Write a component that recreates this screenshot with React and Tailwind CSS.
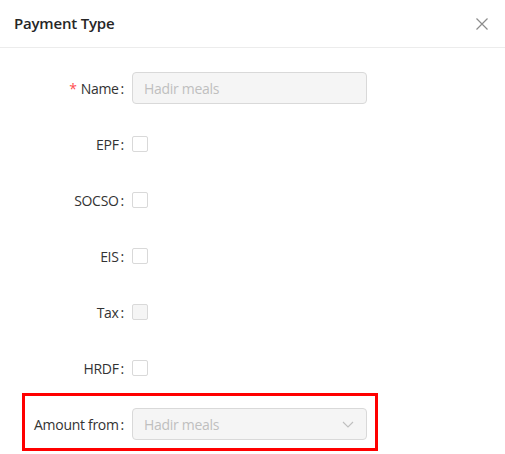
import React from "react";

const font = { fontFamily: '"Open Sans", "Noto Sans", sans-serif' };

function Label({ children, required, w = "w-[124px]" }) {
  return (
    <div className={`${w} h-[32px] shrink-0 flex justify-end items-center text-[14px] tracking-[-0.3px] text-[#333333]`}>
      {required && <span className="text-[#ff4d4f] mr-[4px] text-[14px]">*</span>}
      <span>{children}</span>
      <span className="ml-[2px]">:</span>
    </div>
  );
}

function Checkbox({ disabled }) {
  return (
    <div
      className={`w-[16px] h-[16px] rounded-[2px] border border-[#d9d9d9] ${disabled ? "bg-[#f5f5f5]" : "bg-white"}`}
    />
  );
}

function CheckRow({ label, disabled }) {
  return (
    <div className="flex items-center h-[32px] mt-[24px]">
      <Label>{label}</Label>
      <div className="ml-[8px]">
        <Checkbox disabled={disabled} />
      </div>
    </div>
  );
}

export default function App() {
  return (
    <div className="w-[505px] h-[454px] bg-white overflow-hidden" style={font}>
      <div className="h-[48px] flex items-center justify-between border-b border-[#ececec]">
        <div className="pl-[14px] text-[15px] font-semibold text-[#262626] tracking-[-0.2px]">Payment Type</div>
        <div className="pr-[17px] pt-[1px]">
          <svg width="12" height="12" viewBox="0 0 12 12">
            <path d="M0.5 0.5 L11.5 11.5 M11.5 0.5 L0.5 11.5" stroke="#8c8c8c" strokeWidth="1.2" fill="none" />
          </svg>
        </div>
      </div>
      <div className="pt-[24px]">
        <div className="flex items-center h-[32px]">
          <Label required>Name</Label>
          <div className="ml-[8px] w-[235px] h-[32px] rounded-[4px] border border-[#d9d9d9] bg-[#f5f5f5] flex items-center px-[11px] text-[14px] tracking-[-0.3px] text-[#bfbfbf]">
            Hadir meals
          </div>
        </div>
        <CheckRow label="EPF" />
        <CheckRow label="SOCSO" />
        <CheckRow label="EIS" />
        <CheckRow label="Tax" disabled />
        <CheckRow label="HRDF" />
        <div className="ml-[22px] mt-[9px] w-[356px] h-[58px] border-[3px] border-[#ff0000] flex items-start pt-[12px]">
          <Label w="w-[99px]">Amount from</Label>
          <div className="ml-[8px] w-[235px] h-[32px] rounded-[4px] border border-[#d9d9d9] bg-[#f5f5f5] flex items-center justify-between px-[11px] text-[14px] tracking-[-0.3px] text-[#bfbfbf]">
            <span>Hadir meals</span>
            <svg width="12" height="12" viewBox="0 0 12 12" className="mr-[1px]">
              <path d="M1 4 L6 9 L11 4" stroke="#bfbfbf" strokeWidth="1.1" fill="none" />
            </svg>
          </div>
        </div>
      </div>
    </div>
  );
}
